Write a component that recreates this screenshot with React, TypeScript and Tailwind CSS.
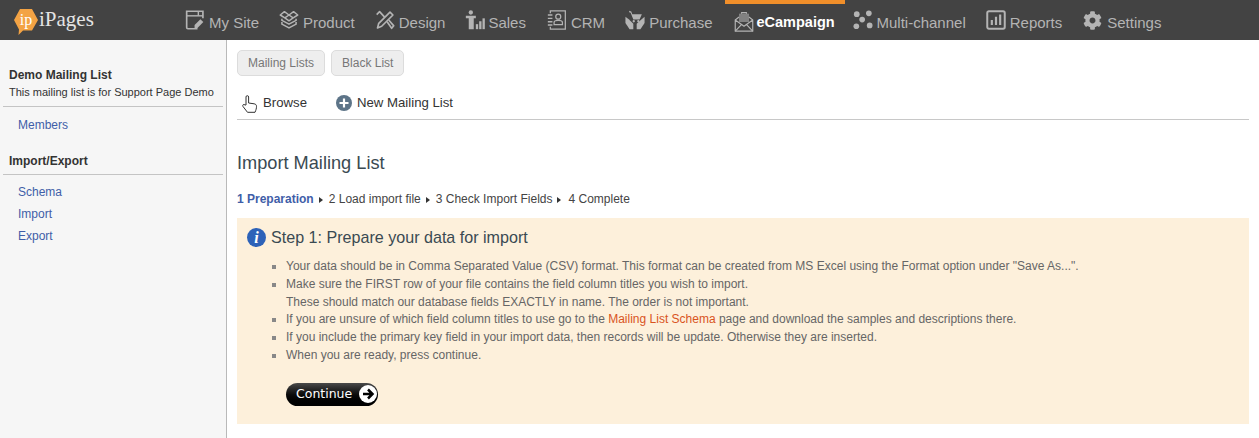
import { FaCog } from "react-icons/fa";
import { ReactNode } from "react";

const iconCls = "w-[20px] h-[20px] mr-[4px] shrink-0 text-[#b4b4b4]";

function MySiteIcon() {
  return (
    <svg viewBox="0 0 24 24" className={iconCls} fill="none" stroke="currentColor" strokeWidth="2">
      <path d="M15 22.500H3.500a1.500 1.500 0 0 1-1.500-1.500V1.500h19.500V10" />
      <path d="M2 7h19.500" strokeWidth="1.700" />
      <path d="M16 1.500V7" strokeWidth="1.700" />
      <path d="M11.500 18l7-7 3.500 3.500-7 7h-3.500z" fill="currentColor" stroke="none" />
    </svg>
  );
}

function ProductIcon() {
  return (
    <svg viewBox="0 0 24 24" className={iconCls} fill="none" stroke="currentColor" strokeWidth="1.800" strokeLinejoin="round">
      <path d="M12 6 6.500 2 1.500 6l5.500 3.500zM12 6l5.500-4 5 4L17 9.500zM7 9.500 12 6l5 3.500-5 3.500z" />
      <path d="M3.500 10.500v2L12 17l8.500-4.500v-2" />
      <path d="M3.500 14.500v2.500L12 21.500l8.500-4.500v-2.500" />
    </svg>
  );
}

function DesignIcon() {
  return (
    <svg viewBox="0 0 24 24" className={iconCls} fill="none" stroke="currentColor" strokeWidth="2" strokeLinejoin="round">
      <path d="M3 21.500l1.500-5.500L18 2.500l3.500 3.500L8 19.500z" />
      <path d="M2 5.500 5.500 2l6 6.500M14.500 14l5.500 8 2.500-3-6-7" />
    </svg>
  );
}

function SalesIcon() {
  return (
    <svg viewBox="0 0 24 24" className="w-[20px] h-[20px] mr-[3px] shrink-0 text-[#b4b4b4]" fill="currentColor">
      <circle cx="7" cy="3" r="2.600" />
      <path d="M1 7h12v3h-2.500v13h-6V10H1z" />
      <rect x="13" y="17" width="2.800" height="6" />
      <rect x="17" y="13.500" width="2.800" height="9.500" />
      <rect x="21" y="10" width="2.800" height="13" />
    </svg>
  );
}

function CrmIcon() {
  return (
    <svg viewBox="0 0 24 24" className={iconCls} fill="none" stroke="currentColor" strokeWidth="1.500">
      <path d="M4 4V1h18v22H4v-3" />
      <path d="M1 6h5.500M1 10h5.500M1 14h5.500M1 18h5.500" strokeWidth="1.700" />
      <circle cx="13.500" cy="8" r="3" />
      <path d="M8.500 17.500v-2.500c0-1.500 2-2.500 5-2.500s5 1 5 2.500v2.500z" />
    </svg>
  );
}

function PurchaseIcon() {
  return (
    <svg viewBox="0 0 24 24" className={iconCls} fill="currentColor">
      <path d="M5 1l2.500.8L8.700 5h11.500L17.500 11.500H10L6.800 3.200 5 2.700z" />
      <circle cx="10.500" cy="13.500" r="1.400" />
      <circle cx="16" cy="13.500" r="1.400" />
      <path d="M0.500 8l4 3 5.500 5.500V23H5.500L0.500 15.500z" />
      <path d="M23.500 8l-3.500 3-6 5.500V23h4.500l5-7.500z" />
    </svg>
  );
}

function CampaignIcon() {
  return (
    <svg viewBox="0 0 24 24" className={iconCls} fill="none" stroke="currentColor" strokeWidth="1.400" strokeLinejoin="round">
      <rect x="6" y="2" width="12" height="10" fill="currentColor" opacity="0.550" stroke="none" />
      <path d="M9 2V.8h6V2" />
      <path d="M1.500 9.500 6 6M22.500 9.500 18 6" />
      <path d="M1.500 9.500v13.500h21V9.500L12 17z" />
      <path d="M1.500 23l8-8.500M22.500 23l-8-8.500" />
    </svg>
  );
}

function MultiIcon() {
  return (
    <svg viewBox="0 0 24 24" className={iconCls} fill="currentColor">
      <circle cx="4.500" cy="5" r="3.400" />
      <circle cx="19" cy="4" r="3.400" />
      <circle cx="11" cy="11.500" r="3.400" />
      <circle cx="4" cy="19.500" r="3.400" />
      <circle cx="20" cy="18.500" r="3.400" />
    </svg>
  );
}

function ReportsIcon() {
  return (
    <svg viewBox="0 0 24 24" className={iconCls} fill="none" stroke="currentColor">
      <rect x="1.500" y="1.500" width="21" height="21" rx="2" strokeWidth="2.400" />
      <path d="M7 18v-6M12 18V8M17 18V5.500" strokeWidth="2.600" />
    </svg>
  );
}

function Logo() {
  return (
    <div className="flex items-center w-[185px] pl-[13px]">
      <svg viewBox="0 0 26 28" className="w-[26px] h-[28px] mt-[3px] shrink-0">
        <path d="M7 1h12l6 11-6 10.500H10L5.500 27 6 21.500 1 12z" fill="#f3a344" />
        <text x="13" y="17" textAnchor="middle" fontSize="16" fill="#ffffff" fontFamily="'Liberation Serif', serif">ip</text>
      </svg>
      <span className="font-['Liberation_Serif',serif] text-[21px] text-[#e4e4e4]">iPages</span>
    </div>
  );
}

function NavItem({ icon, label, className = "" }: { icon: ReactNode; label: string; className?: string }) {
  return (
    <a className={`flex items-center text-[15px] text-[#b4b4b4] ${className}`}>
      {icon}
      <span className="mt-[6px]">{label}</span>
    </a>
  );
}

function Chevron() {
  return <span className="inline-block ml-[5px] mr-[6px] w-0 h-0 border-y-[3.5px] border-y-transparent border-l-[4px] border-l-[#333] translate-y-[1px]" />;
}

export default function App() {
  return (
    <div className="w-[1259px] h-[438px] overflow-hidden bg-white font-['Liberation_Sans',Arial,sans-serif] flex flex-col">
      <header className="h-[40px] bg-[#434343] flex items-center">
        <Logo />
        <nav className="flex items-center h-full">
          <NavItem icon={<MySiteIcon />} label="My Site" className="mr-[20px]" />
          <NavItem icon={<ProductIcon />} label="Product" className="mr-[20px]" />
          <NavItem icon={<DesignIcon />} label="Design" className="mr-[20px]" />
          <NavItem icon={<SalesIcon />} label="Sales" className="mr-[21px]" />
          <NavItem icon={<CrmIcon />} label="CRM" className="mr-[20px]" />
          <NavItem icon={<PurchaseIcon />} label="Purchase" className="mr-[12px]" />
          <a className="h-full w-[120px] border-t-[4px] border-[#f18f2a] flex items-center pl-[9px] text-[14.5px] font-bold text-white mr-[8px]">
            <CampaignIcon />
            <span className="mt-[2px] ml-[-1px]">eCampaign</span>
          </a>
          <NavItem icon={<MultiIcon />} label="Multi-channel" className="mr-[20px]" />
          <NavItem icon={<ReportsIcon />} label="Reports" className="mr-[21px]" />
          <a className="flex items-center text-[15px] text-[#b4b4b4]">
            <FaCog className="w-[19px] h-[19px] mr-[5px] text-[#b4b4b4]" />
            <span className="mt-[6px]">Settings</span>
          </a>
        </nav>
      </header>

      <div className="flex flex-1 min-h-0">
        <aside className="w-[227px] shrink-0 bg-[#f6f6f6] border-r border-[#b9b9b9] pt-[28px] text-[12px]">
          <div className="mx-[3px] border-b border-[#c4c4c4] pb-[7px] pl-[6px]">
            <div className="font-bold text-[#333] leading-[14px]">Demo Mailing List</div>
            <div className="text-[11px] text-[#333] leading-[14px] mt-[3px]">This mailing list is for Support Page Demo</div>
          </div>
          <a className="block pl-[18px] mt-[11px] text-[#3f5ea8] leading-[14px]">Members</a>
          <div className="mx-[3px] mt-[22px] border-b border-[#c4c4c4] pb-[6px] pl-[6px] font-bold text-[#333] leading-[14px]">Import/Export</div>
          <div className="mt-[10px] flex flex-col gap-[8px] pl-[18px] text-[#3f5ea8] leading-[14px]">
            <a>Schema</a>
            <a>Import</a>
            <a>Export</a>
          </div>
        </aside>

        <main className="flex-1 pl-[10px] pr-[10px]">
          <div className="flex gap-[6px] pt-[10px]">
            <button className="h-[26px] px-[10px] rounded-[5px] border border-[#dcdcdc] bg-[#eeeeee] text-[12px] text-[#777]">Mailing Lists</button>
            <button className="h-[26px] px-[10px] rounded-[5px] border border-[#dcdcdc] bg-[#eeeeee] text-[12px] text-[#777]">Black List</button>
          </div>
          <div className="flex items-center h-[37px] mt-[7px] pt-[3px] border-b border-[#c8c8c8] text-[13.2px] text-[#333]">
            <svg viewBox="0 0 18 20" className="w-[18px] h-[20px] ml-[4px] mr-[4px] mt-[2px]" fill="none" stroke="#333" strokeWidth="1" strokeLinejoin="round">
              <path d="M5 11V3a1.300 1.300 0 0 1 2.600 0v6l5.500.8c1.500.3 2.400 1 2.400 2.500 0 2-.5 3.700-1.500 6H6.500L2 12.500c-1-1.500.8-2.800 2-1.500z" />
            </svg>
            <span>Browse</span>
            <svg viewBox="0 0 16 16" className="w-[16px] h-[16px] ml-[29px] mr-[5px] mt-[1px]">
              <circle cx="8" cy="8" r="8" fill="#5d7488" />
              <path d="M8 3.500v9M3.500 8h9" stroke="#fff" strokeWidth="2.200" />
            </svg>
            <span>New Mailing List</span>
          </div>

          <h1 className="mt-[32px] text-[18.2px] leading-[22px] text-[#3a4a52]">Import Mailing List</h1>

          <div className="mt-[18px] flex items-center text-[12px] text-[#444] leading-[14px]">
            <span className="font-bold text-[#3f5ea8]">1 Preparation</span>
            <Chevron />
            <span>2 Load import file</span>
            <Chevron />
            <span>3 Check Import Fields</span>
            <Chevron />
            <span className="ml-[1px]">4 Complete</span>
          </div>

          <section className="mt-[12px] h-[206px] bg-[#fdf0db] pl-[10px] pt-[8px]">
            <div className="flex items-center">
              <svg viewBox="0 0 20 20" className="w-[19px] h-[19px] mr-[5px] mt-[1px]">
                <circle cx="10" cy="10" r="10" fill="#2d62b8" />
                <text x="10" y="16" textAnchor="middle" fontSize="17" fontWeight="700" fontStyle="italic" fill="#fff" fontFamily="'Liberation Serif', serif">i</text>
              </svg>
              <h2 className="text-[16.1px] leading-[22px] text-[#3a4a52]">Step 1: Prepare your data for import</h2>
            </div>
            <ul className="mt-[10px] ml-[39px] list-[square] text-[12px] leading-[17.8px] text-[#666] marker:text-[#888]">
              <li>Your data should be in Comma Separated Value (CSV) format. This format can be created from MS Excel using the Format option under "Save As...".</li>
              <li>
                Make sure the FIRST row of your file contains the field column titles you wish to import.
                <br />
                These should match our database fields EXACTLY in name. The order is not important.
              </li>
              <li>
                If you are unsure of which field column titles to use go to the <a className="text-[#d9541e]">Mailing List Schema</a> page and download the samples and descriptions there.
              </li>
              <li>If you include the primary key field in your import data, then records will be update. Otherwise they are inserted.</li>
              <li>When you are ready, press continue.</li>
            </ul>
            <button className="mt-[18px] ml-[39px] h-[23px] w-[92px] rounded-full bg-gradient-to-b from-[#4a4a4a] via-[#0c0c0c] to-black flex items-center pl-[10px] text-[12.5px] font-['DejaVu_Sans',sans-serif] text-white">
              Continue
              <svg viewBox="0 0 18 18" className="w-[18px] h-[18px] ml-[7px] shrink-0">
                <circle cx="9" cy="9" r="9" fill="#fff" />
                <path d="M4 9h9M9 4.500 13.500 9 9 13.500" fill="none" stroke="#000" strokeWidth="2.500" />
              </svg>
            </button>
          </section>
        </main>
      </div>
    </div>
  );
}
